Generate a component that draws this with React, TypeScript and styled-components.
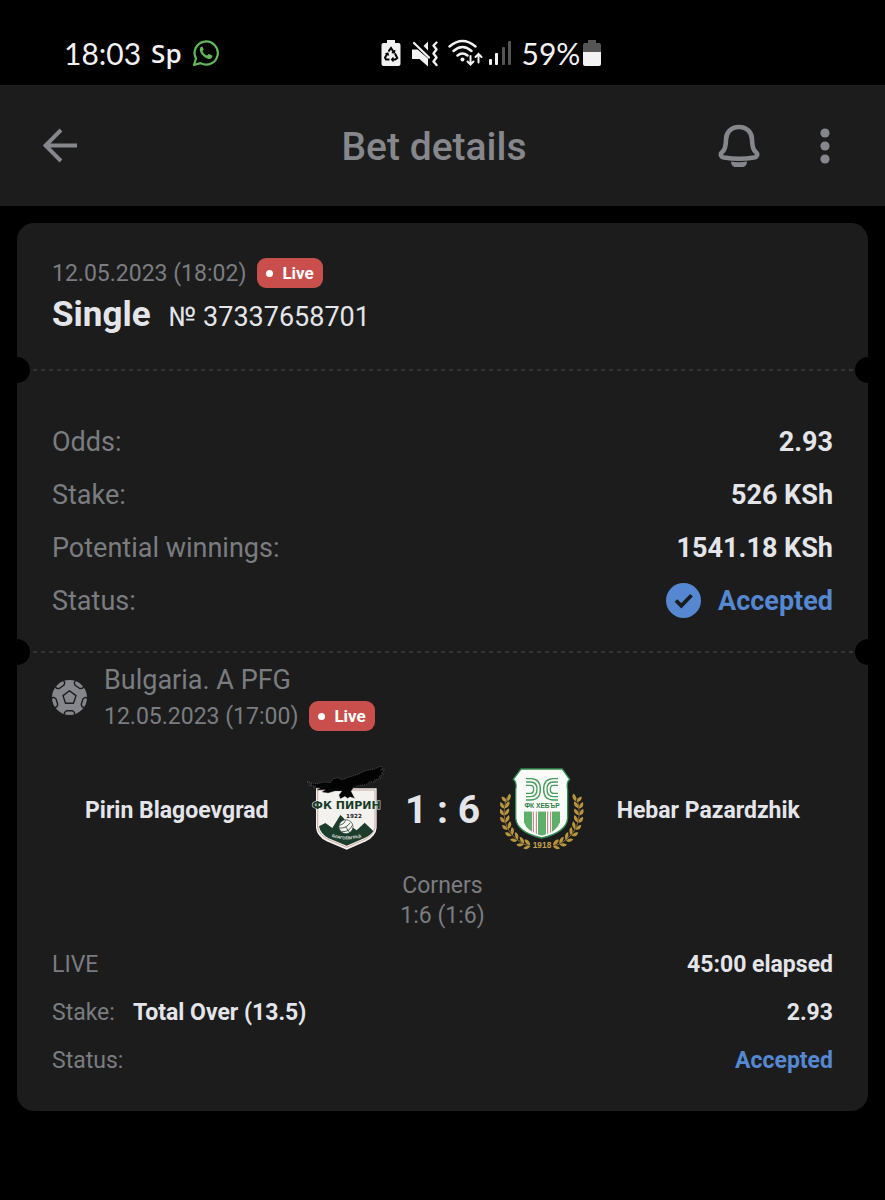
import React from 'react';
import styled, { createGlobalStyle } from 'styled-components';

const color = {
  page: '#000000',
  panel: '#1c1c1c',
  muted: '#86878c',
  dim: '#7b7c80',
  text: '#e4e5ea',
  accent: '#5588d0',
  live: '#c94f4c',
  dash: '#353535',
};

const GlobalStyle = createGlobalStyle`
  * { box-sizing: border-box; }
  body {
    margin: 0;
    background: ${color.page};
    color: ${color.text};
    font-family: Roboto, "Liberation Sans", sans-serif;
  }
  dl, dd, h1, h2, p { margin: 0; font-weight: inherit; }
`;

const StatusBar = styled.div`
  display: flex;
  align-items: center;
  height: 85px;
  padding-top: 21px;
  font-family: Lato, "Open Sans", sans-serif;
  color: #f2f2f2;
`;

const StatusLeft = styled.div`
  display: flex;
  align-items: center;
  gap: 10px;
  flex: 0 0 43%;
  padding-left: 64px;
`;

const StatusRight = styled.div`
  display: flex;
  align-items: center;
  gap: 10px;
`;

const Radios = styled.span`
  display: flex;
  align-items: center;
  gap: 6px;
`;

const StatusText = styled.span`
  font-size: 30px;
  line-height: 36px;
`;

const BrandText = styled.span`
  font-family: "Open Sans", sans-serif;
  font-size: 26px;
  line-height: 36px;
  font-weight: 600;
`;

const Battery = styled.span`
  display: flex;
  align-items: center;
  gap: 3px;
`;

const Header = styled.header`
  display: grid;
  grid-template-columns: 1fr auto 1fr;
  align-items: center;
  height: 121px;
  padding-right: 17px;
  background: ${color.panel};
  color: ${color.muted};
`;

const Title = styled.h1`
  padding-top: 2px;
  font-size: 39px;
  line-height: 48px;
  font-weight: 500;
`;

const Actions = styled.div`
  display: flex;
  justify-content: flex-end;
  gap: 38px;
  padding-right: 19px;
`;

const IconButton = styled.button`
  display: flex;
  align-items: center;
  justify-content: center;
  width: 48px;
  height: 48px;
  padding: 0;
  border: 0;
  background: none;
  color: inherit;
  cursor: pointer;
`;

const BackSlot = styled.div`
  padding-left: 36px;
`;

const Ticket = styled.main`
  margin: 17px;
  border-radius: 17px;
  background: ${color.panel};
`;

const Summary = styled.section`
  padding: 35px 35px 31px;
`;

const Figures = styled.section`
  padding: 44px 35px 24px;
`;

const EventPart = styled.section`
  padding: 10px 35px 27px;
`;

const Perforation = styled.div`
  position: relative;
  height: 2px;
  background: repeating-linear-gradient(90deg, ${color.dash} 0 4px, transparent 4px 8px);

  &::before,
  &::after {
    content: '';
    position: absolute;
    top: -12px;
    width: 26px;
    height: 26px;
    border-radius: 50%;
    background: ${color.page};
  }
  &::before { left: -13px; }
  &::after { right: -13px; }
`;

const DateLine = styled.div`
  display: flex;
  align-items: center;
  gap: 11px;
  height: 30px;
  font-size: 23px;
  color: ${color.dim};
`;

const LiveTag = styled.span`
  display: flex;
  align-items: center;
  gap: 9px;
  height: 30px;
  padding: 0 9px;
  border-radius: 9px;
  background: ${color.live};
  color: #ffffff;
  font-size: 17px;
  font-weight: 700;

  &::before {
    content: '';
    width: 7px;
    height: 7px;
    border-radius: 50%;
    background: #ffffff;
  }
`;

const BetHeading = styled.div`
  display: flex;
  align-items: baseline;
  gap: 18px;
  margin-top: 6px;
  line-height: 42px;
`;

const BetKind = styled.h2`
  font-size: 35px;
  font-weight: 700;
`;

const BetNumber = styled.p`
  font-size: 27px;
`;

const Row = styled.div<{ $small?: boolean }>`
  display: flex;
  align-items: center;
  justify-content: space-between;
  height: ${p => (p.$small ? 48 : 53)}px;
  font-size: ${p => (p.$small ? 23 : 27)}px;
`;

const Label = styled.dt`
  display: flex;
  gap: 18px;
  color: ${color.dim};
`;

const Pick = styled.strong`
  font-weight: 700;
  color: ${color.text};
`;

const Value = styled.dd<{ $accent?: boolean }>`
  display: flex;
  align-items: center;
  gap: 17px;
  font-weight: 700;
  color: ${p => (p.$accent ? color.accent : color.text)};
`;

const League = styled.div`
  display: flex;
  align-items: center;
  gap: 17px;
`;

const LeagueName = styled.p`
  margin-bottom: 4px;
  font-size: 27px;
  line-height: 34px;
  color: ${color.dim};
`;

const Match = styled.div`
  display: grid;
  grid-template-columns: 1fr 84px 114px 84px 1fr;
  align-items: center;
  margin-top: 34px;
  text-align: center;
`;

const Team = styled.span`
  font-size: 23px;
  font-weight: 700;
`;

const Score = styled.strong`
  font-size: 39px;
  font-weight: 700;
`;

const Corners = styled.div`
  margin: 16px 0 9px;
  font-size: 23px;
  line-height: 30px;
  text-align: center;
  color: ${color.dim};
`;

const WhatsAppIcon = () => (
  <svg width="28" height="28" viewBox="0 0 28 28" fill="none" aria-label="WhatsApp">
    <path d="M2 26l2-6.5a11.6 11.6 0 1 1 4.500 4.600z" stroke="#62b858" strokeWidth="2.200" strokeLinejoin="round" />
    <path d="M10.100 7.600c-.9 0-2.400 1.200-2.300 3.100.2 3.700 5 8.700 8.900 9.200 1.900.2 3.600-.9 3.700-2.700 0-.4-.1-.6-.5-.8l-2.700-1.300c-.4-.2-.7-.1-1 .3l-1 1.200c-2-.7-3.900-2.500-4.700-4.400l1-1.300c.2-.3.200-.5.100-.8l-1-2.100c-.1-.3-.3-.4-.5-.4z" fill="#62b858" />
  </svg>
);

const RecycleBatteryIcon = () => (
  <svg width="20" height="26" viewBox="0 0 20 26" fill="#f2f2f2">
    <path d="M6 0h8v3h3.500q2 0 2 2v19q0 2-2 2h-15q-2 0-2-2V5q0-2 2-2H6z" />
    <g fill="none" stroke="#000" strokeWidth="2">
      <path d="M7.500 11.500L10 8l2.800 4.200" />
      <path d="M14 13.500l2.200 4.500-2 1.500h-3.200" />
      <path d="M8.500 19.500H5L4 17.500l2.500-4" />
      <path d="M10.800 12.500l2.500.3.500-2.600M12.500 17.500l-1.800 2 1.800 2M4.400 13.800l2.300-.7.900 2.500" strokeWidth="1.400" />
    </g>
  </svg>
);

const MuteIcon = () => (
  <svg width="27" height="27" viewBox="0 0 27 27" fill="none" stroke="#f2f2f2" strokeLinecap="round">
    <path d="M1 9.500h5.500L17 18.500V26.500L8.500 19H1z" fill="#f2f2f2" stroke="none" />
    <path d="M12.500 6L17 1.500v9z" fill="#f2f2f2" stroke="none" />
    <path d="M3 3l15 14.500" strokeWidth="2.200" />
    <path d="M25.500 2.500l-3 3 3 4-3 4 3 4-3 4 3 3.500" strokeWidth="2.400" strokeLinejoin="round" />
  </svg>
);

const WifiIcon = () => (
  <svg width="35" height="28" viewBox="0 0 35 28" fill="none" stroke="#f2f2f2" strokeLinecap="round">
    <path d="M1.500 7.500q13-11 26 0M5.500 12q9-8 18 0M9.500 16.500q5-4 10 0" strokeWidth="2.400" />
    <circle cx="14.500" cy="20.500" r="2" fill="#f2f2f2" stroke="none" />
    <path d="M22.500 17v8M19.500 22.500l3 3 3-3M30.500 23.500v-8M27.500 18l3-3 3 3" strokeWidth="2" />
  </svg>
);

const SignalIcon = () => (
  <svg width="23" height="26" viewBox="0 0 23 26">
    <rect x="0" y="19" width="3" height="6" rx="1" fill="#f2f2f2" />
    <rect x="6" y="13" width="3" height="12" rx="1" fill="#f2f2f2" />
    <rect x="13" y="7" width="3" height="18" rx="1" fill="#555" />
    <rect x="19" y="1" width="3" height="24" rx="1" fill="#555" />
  </svg>
);

const BatteryIcon = () => (
  <svg width="18" height="26" viewBox="0 0 18 26">
    <path d="M5 0h8v3h3q2 0 2 2v7H0V5q0-2 2-2h3z" fill="#555" />
    <path d="M0 12h18v12q0 2-2 2H2q-2 0-2-2z" fill="#f2f2f2" />
  </svg>
);

const BackIcon = () => (
  <svg width="34" height="36" viewBox="0 0 34 36" fill="none" stroke="currentColor" strokeWidth="4">
    <path d="M18 2L2.500 17.500 18 33M3 17.500h31" />
  </svg>
);

const BellIcon = () => (
  <svg width="42" height="44" viewBox="0 0 42 44" fill="none" stroke="currentColor" strokeWidth="4.600">
    <path d="M21 3C13 3 8 8.500 8 15.500C8 23 7 26 3.800 28.500C1.800 30.500 3 33 6 33.600Q21 36 36 33.600C39 33 40.200 30.500 38.200 28.500C35 26 34 23 34 15.500C34 8.500 29 3 21 3z" />
    <path d="M13 37.500Q21 39 29 37.500C29 41 27 43 24 43H18C15 43 13 41 13 37.500z" fill="currentColor" stroke="none" />
  </svg>
);

const MoreIcon = () => (
  <svg width="10" height="36" viewBox="0 0 10 36" fill="currentColor">
    <circle cx="5" cy="5" r="4.600" />
    <circle cx="5" cy="18" r="4.600" />
    <circle cx="5" cy="31" r="4.600" />
  </svg>
);

const CheckIcon = () => (
  <svg width="35" height="35" viewBox="0 0 35 35">
    <circle cx="17.500" cy="17.500" r="17.500" fill={color.accent} />
    <path d="M10 17.500l5.300 5.300L25.500 12.300" fill="none" stroke={color.panel} strokeWidth="3.800" />
  </svg>
);

const BallIcon = () => (
  <svg width="35" height="35" viewBox="0 0 35 35">
    <circle cx="17.500" cy="17.500" r="17.500" fill={color.muted} />
    <g fill="none" stroke={color.panel} strokeWidth="1.400" strokeLinejoin="round">
      <path d="M17.500 10.800l6.500 4.800-2.500 7.600h-8l-2.500-7.600z" />
      {[0, 72, 144, 216, 288].map(angle => (
        <path key={angle} transform={`rotate(${angle} 17.500 17.500)`} d="M12.500 34.500v-2l2-1.700h6l2 1.700v2" />
      ))}
    </g>
  </svg>
);

const PirinCrest = () => (
  <svg width="84" height="90" viewBox="34 30 252 270" role="img" aria-label="Pirin Blagoevgrad crest">
    <path d="M76 100H258V218Q256 243 226 259L168 284L108 259Q78 243 76 218z" fill="#f4f2ee" />
    <path d="M81 105H253V216Q250 239 223 253L168 277L112 253Q84 239 81 216z" fill="none" stroke="#b98079" strokeWidth="2" />
    <path d="M85 214L104 204L125 219L149 180L158 188L170 207L198 226L222 203L248 228Q240 241 220 250L168 272L114 250Q90 238 85 214z" fill="#1c3d2b" />
    <circle cx="166" cy="215" r="21" fill="#f5f5f2" stroke="#34463c" strokeWidth="2" />
    <path d="M147 211Q162 207 165 196M148 219Q166 221 179 203M153 229Q175 233 185 211M165 215L177 233" fill="none" stroke="#34463c" strokeWidth="2.500" />
    <path id="pirin-ribbon" d="M119 244Q168 262 216 244" fill="none" />
    <text fontFamily="Liberation Sans, sans-serif" fontSize="12" fontWeight="700" fill="#e8e9e4">
      <textPath href="#pirin-ribbon" startOffset="50%" textAnchor="middle">БЛАГОЕВГРАД</textPath>
    </text>
    <path d="M49 80L62 84L78 86L102 81L119 83L127 72L140 68L154 74L173 67L205 57L224 47L251 42L272 33L275 40L270 46L282 43L273 55L279 57L264 65L270 70L251 75L253 81L238 80L226 89L207 91L188 98L181 109L192 130L178 125L171 130L163 124L149 131L145 120L154 108L133 108L112 114L94 111L104 104L78 105L88 99L68 98L75 93L56 91L64 87z" fill="#030303" stroke="#808080" strokeWidth="1.600" strokeDasharray="3 3" />
    <text x="167" y="163" textAnchor="middle" fontFamily="DejaVu Sans, sans-serif" fontSize="33" fontWeight="700" fill="#173c29" stroke="#f1f1ea" strokeWidth="3" paintOrder="stroke">ФК ПИРИН</text>
    <text x="190" y="188" textAnchor="middle" fontFamily="DejaVu Sans, sans-serif" fontSize="17" fontWeight="700" fill="#222">1922</text>
  </svg>
);

const leaves = [
  [61, 132, -20], [55, 152, -5], [54, 173, -3], [56, 195, -12], [63, 216, -25], [73, 235, -38], [88, 251, -53], [106, 264, -67], [125, 271, -82],
];

const Laurel = () => (
  <g fill="#b8963f">
    <path d="M62 128Q38 207 91 252Q110 269 133 274" fill="none" stroke="#b8963f" strokeWidth="2" />
    {leaves.map(([x, y, angle]) => (
      <g key={y} transform={`translate(${x} ${y}) rotate(${angle}) scale(1.2)`}>
        <path d="M-1 7Q-14 3 -9 -10Q1 -5 -1 7z" />
        <path d="M1 7Q16 2 13 -10Q1 -6 1 7z" />
      </g>
    ))}
  </g>
);

const HebarCrest = () => (
  <svg width="84" height="90" viewBox="42 30 252 270" role="img" aria-label="Hebar Pazardzhik crest">
    <Laurel />
    <g transform="translate(334 0) scale(-1 1)"><Laurel /></g>
    <path d="M105 42H229L251 73Q240 83 245 105V190Q241 232 167 249Q93 232 89 190V105Q94 83 82 73z" fill="#fafbf8" stroke="#348b50" strokeWidth="4" />
    <clipPath id="hebar-field"><path d="M114 169H222V202Q211 232 168 242Q123 231 114 202z" /></clipPath>
    <g clipPath="url(#hebar-field)">
      <rect x="114" y="169" width="108" height="75" fill="#fafbf8" />
      <path d="M114 169h24v76h-24zM156 169h24v76h-24zM198 169h24v76h-24z" fill="#5eaf67" />
      <path d="M142 169v76M151 169v76M185 169v76M194 169v76" stroke="#bd7680" strokeWidth="3" />
    </g>
    <g fill="none" stroke="#469a5b" strokeWidth="4">
      <path d="M120 71H134Q163 71 163 103Q163 135 134 135H120M120 81H134Q153 81 153 103Q153 125 134 125H120M120 91H134Q143 91 143 103Q143 115 134 115H120" />
      <path d="M216 71H202Q173 71 173 103Q173 135 202 135H216M216 81H202Q183 81 183 103Q183 125 202 125H216M216 91H202Q193 91 193 103Q193 115 202 115H216" />
    </g>
    <text x="168" y="160" textAnchor="middle" fontFamily="Liberation Sans, sans-serif" fontSize="20" fontWeight="700" fill="#34804b">ФК ХЕБЪР</text>
    <text x="168" y="280" textAnchor="middle" fontFamily="Liberation Sans, sans-serif" fontSize="25" fontWeight="700" fill="#c4a050">1918</text>
  </svg>
);

export default function App() {
  return (
    <>
      <GlobalStyle />
      <StatusBar>
        <StatusLeft>
          <StatusText>18:03</StatusText>
          <BrandText>Sp</BrandText>
          <WhatsAppIcon />
        </StatusLeft>
        <StatusRight>
          <RecycleBatteryIcon />
          <MuteIcon />
          <Radios>
            <WifiIcon />
            <SignalIcon />
          </Radios>
          <Battery>
            <StatusText>59%</StatusText>
            <BatteryIcon />
          </Battery>
        </StatusRight>
      </StatusBar>
      <Header>
        <BackSlot>
          <IconButton aria-label="Back"><BackIcon /></IconButton>
        </BackSlot>
        <Title>Bet details</Title>
        <Actions>
          <IconButton aria-label="Notifications"><BellIcon /></IconButton>
          <IconButton aria-label="More options"><MoreIcon /></IconButton>
        </Actions>
      </Header>
      <Ticket>
        <Summary>
          <DateLine>12.05.2023 (18:02)<LiveTag>Live</LiveTag></DateLine>
          <BetHeading>
            <BetKind>Single</BetKind>
            <BetNumber>№ 37337658701</BetNumber>
          </BetHeading>
        </Summary>
        <Perforation />
        <Figures>
          <dl>
            <Row><Label>Odds:</Label><Value>2.93</Value></Row>
            <Row><Label>Stake:</Label><Value>526 KSh</Value></Row>
            <Row><Label>Potential winnings:</Label><Value>1541.18 KSh</Value></Row>
            <Row><Label>Status:</Label><Value $accent><CheckIcon />Accepted</Value></Row>
          </dl>
        </Figures>
        <Perforation />
        <EventPart>
          <League>
            <BallIcon />
            <div>
              <LeagueName>Bulgaria. A PFG</LeagueName>
              <DateLine>12.05.2023 (17:00)<LiveTag>Live</LiveTag></DateLine>
            </div>
          </League>
          <Match>
            <Team>Pirin Blagoevgrad</Team>
            <PirinCrest />
            <Score>1 : 6</Score>
            <HebarCrest />
            <Team>Hebar Pazardzhik</Team>
          </Match>
          <Corners>
            <p>Corners</p>
            <p>1:6 (1:6)</p>
          </Corners>
          <dl>
            <Row $small><Label>LIVE</Label><Value>45:00 elapsed</Value></Row>
            <Row $small><Label>Stake: <Pick>Total Over (13.5)</Pick></Label><Value>2.93</Value></Row>
            <Row $small><Label>Status:</Label><Value $accent>Accepted</Value></Row>
          </dl>
        </EventPart>
      </Ticket>
    </>
  );
}
